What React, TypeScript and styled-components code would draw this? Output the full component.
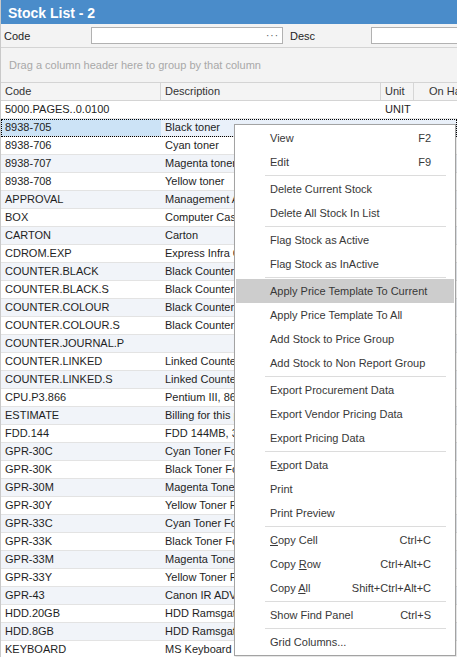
import React from 'react';
import styled, {createGlobalStyle} from "styled-components";

//styles
const GlobalStyle = createGlobalStyle`
  html, body {
    margin: 0;
    padding: 0;
    background: #ffffff;
    overflow: hidden;
  }
  * {
    box-sizing: border-box;
  }
`
const Window = styled.div`
  position: relative;
  width: 457px;
  height: 657px;
  overflow: hidden;
  display: flex;
  flex-direction: column;
  border-left: 1px solid #c9c9c9;
  font-family: "Liberation Sans", Arial, sans-serif;
  font-size: 11px;
  color: #1e1e1e;
  background: #ffffff;
`
const TitleBar = styled.div`
  height: 24px;
  flex-shrink: 0;
  background: #4a8cca;
  color: #ffffff;
  font-weight: bold;
  font-size: 14px;
  display: flex;
  align-items: center;
  padding-left: 7px;
  padding-top: 1px;
`
const FilterBar = styled.div`
  height: 23px;
  flex-shrink: 0;
  background: #f3f3f3;
  display: flex;
  align-items: center;
  padding-left: 3px;
  white-space: nowrap;
`
const FilterLabel = styled.div<{ $width: number }>`
  width: ${p => p.$width}px;
  flex-shrink: 0;
  color: #1e1e1e;
`
const FilterInput = styled.div<{ $width?: number }>`
  height: 17px;
  width: ${p => (p.$width ? `${p.$width}px` : "200px")};
  flex-shrink: 0;
  background: #ffffff;
  border: 1px solid #b1b1b1;
  display: flex;
  align-items: center;
  justify-content: flex-end;
  padding-right: 3px;
  color: #555555;
  font-size: 10px;
  letter-spacing: 1px;
`
const GroupPanel = styled.div`
  height: 36px;
  flex-shrink: 0;
  background: #f3f3f3;
  border-top: 1px solid #d4d4d4;
  border-bottom: 1px solid #d4d4d4;
  display: flex;
  align-items: center;
  padding-left: 8px;
  color: #a8a8a8;
  white-space: nowrap;
`
const columns = "160px 220px 33px 64px"
const HeaderRow = styled.div`
  height: 18px;
  flex-shrink: 0;
  display: grid;
  grid-template-columns: ${columns};
  background: #f4f4f4;
  border-bottom: 1px solid #d4d4d4;
  color: #333333;
`
const HeaderCell = styled.div<{ $right?: boolean }>`
  border-right: 1px solid #d6d6d6;
  padding: 0 4px;
  line-height: 17px;
  white-space: nowrap;
  overflow: hidden;
  text-align: ${p => (p.$right ? "right" : "left")};
`
const Row = styled.div<{ $alt: boolean; $selected: boolean }>`
  height: 18px;
  flex-shrink: 0;
  display: grid;
  grid-template-columns: ${columns};
  background: ${p => (p.$selected ? "#eaf1fa" : p.$alt ? "#f1f4f9" : "#ffffff")};
  border-bottom: 1px solid #e3e3e3;
  outline: ${p => (p.$selected ? "1px dotted #000000" : "none")};
  outline-offset: -1px;
`
const Cell = styled.div<{ $focus?: boolean }>`
  padding: 0 4px;
  line-height: 17px;
  white-space: nowrap;
  overflow: hidden;
  background: ${p => (p.$focus ? "#cce3f6" : "transparent")};
`
const Menu = styled.div`
  position: absolute;
  left: 233px;
  top: 124px;
  width: 222px;
  background: #ffffff;
  border: 1px solid #a3a3a3;
  padding: 1px;
  box-shadow: 1px 1px 2px rgba(0, 0, 0, 0.15);
  color: #383838;
  font-size: 11px;
`
const MenuItem = styled.div<{ $active?: boolean }>`
  height: 24px;
  display: flex;
  align-items: center;
  justify-content: space-between;
  padding-left: 34px;
  padding-right: 23px;
  background: ${p => (p.$active ? "#cdcdcd" : "transparent")};
  white-space: nowrap;
`
const Separator = styled.div`
  height: 1px;
  margin: 1px 8px 1px 29px;
  background: #dcdcdc;
`
const Key = styled.span`
  text-decoration: underline;
`

type MenuEntry = { label: React.ReactNode; key?: string; active?: boolean } | "sep"

const rows: [string, string, string?][] = [
    ["5000.PAGES..0.0100", "", "UNIT"],
    ["8938-705", "Black toner"],
    ["8938-706", "Cyan toner"],
    ["8938-707", "Magenta toner"],
    ["8938-708", "Yellow toner"],
    ["APPROVAL", "Management Approval"],
    ["BOX", "Computer Case"],
    ["CARTON", "Carton"],
    ["CDROM.EXP", "Express Infra CDROM"],
    ["COUNTER.BLACK", "Black Counter"],
    ["COUNTER.BLACK.S", "Black Counter"],
    ["COUNTER.COLOUR", "Black Counter"],
    ["COUNTER.COLOUR.S", "Black Counter"],
    ["COUNTER.JOURNAL.P", ""],
    ["COUNTER.LINKED", "Linked Counter"],
    ["COUNTER.LINKED.S", "Linked Counter"],
    ["CPU.P3.866", "Pentium III, 866"],
    ["ESTIMATE", "Billing for this project"],
    ["FDD.144", "FDD 144MB, 3.5\""],
    ["GPR-30C", "Cyan Toner For"],
    ["GPR-30K", "Black Toner For"],
    ["GPR-30M", "Magenta Toner"],
    ["GPR-30Y", "Yellow Toner For"],
    ["GPR-33C", "Cyan Toner For"],
    ["GPR-33K", "Black Toner For"],
    ["GPR-33M", "Magenta Toner"],
    ["GPR-33Y", "Yellow Toner For"],
    ["GPR-43", "Canon IR ADV"],
    ["HDD.20GB", "HDD Ramsgate"],
    ["HDD.8GB", "HDD Ramsgate"],
    ["KEYBOARD", "MS Keyboard"],
]

const menu: MenuEntry[] = [
    {label: "View", key: "F2"},
    {label: "Edit", key: "F9"},
    "sep",
    {label: "Delete Current Stock"},
    {label: "Delete All Stock In List"},
    "sep",
    {label: "Flag Stock as Active"},
    {label: "Flag Stock as InActive"},
    "sep",
    {label: "Apply Price Template To Current", active: true},
    {label: "Apply Price Template To All"},
    {label: "Add Stock to Price Group"},
    {label: "Add Stock to Non Report Group"},
    "sep",
    {label: "Export Procurement Data"},
    {label: "Export Vendor Pricing Data"},
    {label: "Export Pricing Data"},
    "sep",
    {label: <>E<Key>x</Key>port Data</>},
    {label: "Print"},
    {label: "Print Preview"},
    "sep",
    {label: <><Key>C</Key>opy Cell</>, key: "Ctrl+C"},
    {label: <>Copy <Key>R</Key>ow</>, key: "Ctrl+Alt+C"},
    {label: <>Copy <Key>A</Key>ll</>, key: "Shift+Ctrl+Alt+C"},
    "sep",
    {label: "Show Find Panel", key: "Ctrl+S"},
    "sep",
    {label: "Grid Columns..."},
]

const App = () => {
    return (
        <Window>
            <GlobalStyle/>
            <TitleBar>Stock List - 2</TitleBar>
            <FilterBar>
                <FilterLabel $width={87}>Code</FilterLabel>
                <FilterInput $width={192}>···</FilterInput>
                <FilterLabel $width={81} style={{marginLeft: "7px"}}>Desc</FilterLabel>
                <FilterInput $width={120}/>
            </FilterBar>
            <GroupPanel>Drag a column header here to group by that column</GroupPanel>
            <HeaderRow>
                <HeaderCell>Code</HeaderCell>
                <HeaderCell>Description</HeaderCell>
                <HeaderCell>Unit</HeaderCell>
                <HeaderCell $right>On Hand</HeaderCell>
            </HeaderRow>
            {rows.map(([code, desc, unit], i) => (
                <Row key={code} $alt={i % 2 === 1} $selected={i === 1}>
                    <Cell $focus={i === 1}>{code}</Cell>
                    <Cell>{desc}</Cell>
                    <Cell>{unit ?? ""}</Cell>
                    <Cell/>
                </Row>
            ))}
            <Menu>
                {menu.map((m, i) => m === "sep" ? <Separator key={i}/> : (
                    <MenuItem key={i} $active={m.active}>
                        <span>{m.label}</span>
                        {m.key && <span>{m.key}</span>}
                    </MenuItem>
                ))}
            </Menu>
        </Window>
    )
};

export default App;
